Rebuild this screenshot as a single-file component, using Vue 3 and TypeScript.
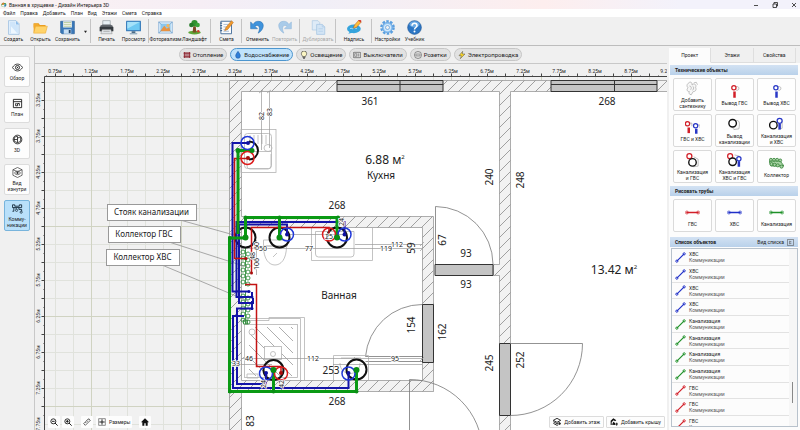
<script setup lang="ts">
import { ref } from 'vue'

interface Tool { id: string; label: string; icon: string; disabled?: boolean }
interface Tile { label: string[]; icon: string }
interface Mark { t: string; x: number; y: number; r?: boolean; k?: string }

const icons: Record<string, string> = {
  app: '<path d="M1 9 8 3l12 2 2 8-8 8-11-3z" fill="#43a047"/><path d="M3 12l8-3 10 3-6 8-11-2z" fill="#f4f8f0"/><path d="M2 8 9 2l5 5-6 5z" fill="#e0782c"/><path d="M13 11l7-2v7l-6 4z" fill="#2f7dc4"/>',
  create: '<path d="M4 1h12l5 5v17H4z" fill="#e4f1fd" stroke="#8db4dc"/><path d="M6 3h9v5h4v13H6z" fill="#cfe5fa"/><path d="M16 1v6h5z" fill="#8ebdea"/><path d="M8 10l10 11H8z" fill="#eef7ff"/>',
  open: '<path d="M1 5h8l2 3h9v4H1z" fill="#e79a1c"/><path d="M1 20V6h7l2 3h10v11z" fill="#f3ab2f"/><path d="M4 10h19l-3 11H1z" fill="#ffd36a" stroke="#e9a32c" stroke-width=".8"/>',
  save: '<path d="M1 2h22v20H3l-2-2z" fill="#3a78b8" stroke="#2a5d95"/><path d="M5 2h14v10H5z" fill="#f4f4ef"/><path d="M6 4h12M6 7h12M6 10h12" stroke="#9dbb7a"/><path d="M6 15h12v7H6z" fill="#c9dff4"/><path d="M14 16h3v5h-3z" fill="#26486e"/>',
  print: '<path d="M6 1h12v9H6z" fill="#e8f0f5" stroke="#8b969d"/><path d="M2 9l4-2h12l4 2v9H2z" fill="#60666c"/><path d="M1 11h22v7H1z" fill="#343a3f"/><path d="M5 15h14l2 7H3z" fill="#dfe4e8" stroke="#777" stroke-width=".7"/><path d="M7 18h10" stroke="#888"/>',
  preview: '<rect x="0" y="1" width="24" height="17" rx="1" fill="#3f81bd"/><path d="M2 3h20v13H2z" fill="#6ec9f3"/><path d="M2 3h20L2 14z" fill="#a5e2fa"/><path d="M9 18h6v3H9z" fill="#4d6c87"/><path d="M6 21h12v2H6z" fill="#8fa9bd"/>',
  photo: '<path d="M1 3h22v18H1z" fill="#d8ebfa" stroke="#7ba9d2"/><path d="M4 6h16v12H4z" fill="#8bc7ef"/><path d="M4 17l6-8 4 5 4-3 2 7H4z" fill="#e99342"/><circle cx="16" cy="9" r="2.6" fill="#f6b65b"/><path d="M1 3l4 4M23 3l-4 4M1 21l4-4M23 21l-4-4" stroke="#4d86bb"/>',
  land: '<ellipse cx="12" cy="20" rx="10" ry="3" fill="#5da637"/><path d="M10 10h4l1 10H9z" fill="#7b4a24"/><circle cx="12" cy="5" r="5" fill="#2f9130"/><circle cx="7" cy="8" r="3.6" fill="#247c29"/><circle cx="17" cy="8" r="3.6" fill="#3aa53a"/><circle cx="18" cy="18" r="2" fill="#cf3b2b"/>',
  estimate: '<path d="M3 2h17v20H3z" fill="#fdfdfd" stroke="#466f9c" stroke-width="1.5"/><path d="M7 7h8M7 11h7M7 15h5M7 18h9" stroke="#7898bd"/><path d="M2 5h3M2 9h3M2 13h3M2 17h3" stroke="#2d5684" stroke-width="1.6"/><path d="M9 17l2-5L20 1l3 3-9 11z" fill="#f19a2b" stroke="#a75c13" stroke-width=".7"/>',
  undo: '<path d="M1 3v11h11l-4-4c5-4 10 1 5 11 10-5 12-19 0-19-4 0-6 2-8 5z" fill="#3f93dc" stroke="#2168ab" stroke-width=".8"/>',
  redo: '<path d="M23 3v11H12l4-4c-5-4-10 1-5 11C1 16-1 2 11 2c4 0 6 2 8 5z" fill="#a9cbe9" stroke="#8db3d6" stroke-width=".8"/>',
  dup: '<path d="M2 1h9l3 3v12H2z" fill="#deebf7" stroke="#a5c5e2"/><path d="M9 7h9l4 4v12H9z" fill="#d2e4f5" stroke="#9bbfdf"/><path d="M18 7v4h4M12 14h7M12 18h7" fill="none" stroke="#a8c7e4"/>',
  note: '<ellipse cx="11" cy="14" rx="11" ry="7" fill="#35a4dc"/><path d="M5 18l-3 4 8-2z" fill="#35a4dc"/><path d="M5 14c2-3 3 2 5-1s3 2 6 0" fill="none" stroke="#d8f3ff" stroke-width="1.2"/><path d="M10 13l2-5 7-8 4 3-8 9z" fill="#ffbf3b" stroke="#a34619" stroke-width=".7"/><path d="M18 1l4 3 1-3-3-2z" fill="#d33b2f"/>',
  gear: '<circle cx="12" cy="12" r="10" fill="none" stroke="#5a9fe0" stroke-width="3.4" stroke-dasharray="4 2.28"/><circle cx="12" cy="12" r="8.2" fill="#8cc3f3" stroke="#4a90d6"/><circle cx="12" cy="12" r="5.8" fill="#d4e9fb"/><circle cx="12" cy="12" r="3.2" fill="#f0f0f0" stroke="#4a90d6"/>',
  help: '<circle cx="12" cy="12" r="11" fill="#2c76c4" stroke="#1f5796"/><ellipse cx="12" cy="7" rx="8" ry="5" fill="#6aa9e4"/><path d="M8 9c0-5 8-5 8 0 0 3-4 3-4 6" fill="none" stroke="#fff" stroke-width="2.4"/><circle cx="12" cy="18.5" r="1.6" fill="#fff"/>',
  heat: '<path d="M4 3v18M9 3v18M15 3v18M20 3v18" stroke="#8a1c28" stroke-width="3"/><path d="M2 7h20M2 17h20" stroke="#8a1c28" stroke-width="2"/>',
  drop: '<path d="M12 1c4 6 7 9 7 14a7 7 0 0 1-14 0c0-5 3-8 7-14z" fill="#2f7fd8" stroke="#174f96" stroke-width="1.5"/>',
  bulb: '<path d="M8 17c0-3-4-4-4-9a8 8 0 0 1 16 0c0 5-4 6-4 9z" fill="#fbf6c4" stroke="#333" stroke-width="1.8"/><path d="M8 19h8M9 22h6" stroke="#222" stroke-width="2"/>',
  sw: '<rect x="1" y="4" width="22" height="16" rx="2" fill="none" stroke="#444" stroke-width="1.8"/><path d="M5 8h6v8H5zM14 9h5M14 12h5M14 15h5" fill="none" stroke="#444" stroke-width="1.4"/>',
  sock: '<circle cx="12" cy="12" r="10.6" fill="none" stroke="#444" stroke-width="1.6"/><rect x="5" y="9" width="14" height="6" rx="3" fill="none" stroke="#444" stroke-width="1.3"/><circle cx="9" cy="12" r="1" fill="#333"/><circle cx="15" cy="12" r="1" fill="#333"/>',
  bolt: '<path d="M14 1 3 14h7l-3 9 14-14h-8z" fill="#ffd924" stroke="#555" stroke-width="1.6"/>',
  eye: '<path d="M1 12c6-10 16-10 22 0-6 10-16 10-22 0z" fill="none" stroke="#222" stroke-width="1.8"/><circle cx="12" cy="12" r="4.4" fill="none" stroke="#222" stroke-width="2"/><circle cx="12" cy="12" r="1.5" fill="#222"/>',
  plan: '<path d="M3 3h18v18H3z" fill="none" stroke="#222" stroke-width="2"/><path d="M3 8h18M8 12v5h4v-5h4v5M8 12h2" fill="none" stroke="#222" stroke-width="2"/>',
  cube: '<circle cx="12" cy="12" r="9.5" fill="none" stroke="#222" stroke-width="1.8"/><path d="M5 7l7-2v14l-7-3zM12 9l7-3v10l-7 3M3 12h9" fill="none" stroke="#222" stroke-width="1.8"/>',
  inside: '<path d="M12 1l10 5v12l-10 5L2 18V6z" fill="none" stroke="#333" stroke-width="1.5"/><path d="M2 6l10 4 10-4M5 13c4-5 10-5 14 0-4 5-10 5-14 0z" fill="none" stroke="#333" stroke-width="1.5"/><circle cx="12" cy="13" r="2.4" fill="#333"/>',
  pipes: '<path d="M1 4h5v3h10V4h5v6H1zM4 10v8H1M15 10v4h6v4M9 10v4" fill="none" stroke="#172c3d" stroke-width="2"/><circle cx="10" cy="16" r="2.4" fill="none" stroke="#172c3d" stroke-width="1.6"/><circle cx="20" cy="20" r="2.4" fill="none" stroke="#172c3d" stroke-width="1.6"/>',
  ware: '<path d="M6 3c3-3 6 0 5 3 4-3 8 0 6 4 2 5-1 7-4 7l-3 5c-4 0-4-4-3-5-4 0-5-4-2-6-3-3-2-6 1-8z" fill="#f7f7f7" stroke="#888" stroke-width=".8"/><path d="M7 8c3 0 4 3 2 6M12 8c2 1 3 4 0 7M14 3l4-1 2 4" fill="none" stroke="#888" stroke-width=".8"/>',
  hot: '<path d="M12 6c4-3 7-2 7 1s-3 4-5 2" fill="none" stroke="#999"/><circle cx="11" cy="6" r="3.4" fill="#fff" stroke="#d21f28" stroke-width="2"/><path d="M10 12h4v10h-4z" fill="#d21f28"/>',
  cold: '<path d="M12 6c4-3 7-2 7 1s-3 4-5 2" fill="none" stroke="#999"/><circle cx="11" cy="6" r="3.4" fill="#fff" stroke="#2837c6" stroke-width="2"/><path d="M10 12h4v10h-4z" fill="#2837c6"/>',
  both: '<circle cx="4" cy="6" r="3.4" fill="#fff" stroke="#d21f28" stroke-width="2"/><path d="M4 12h4v9H4z" fill="#d21f28"/><path d="M8 5h3v5M21 8h3v5" fill="none" stroke="#999"/><circle cx="17" cy="9" r="3.4" fill="#fff" stroke="#2837c6" stroke-width="2"/><path d="M16 14h4v8h-4z" fill="#2837c6"/>',
  sewer: '<path d="M13 6c7-2 8 3 6 13l-8 1-2-3" fill="#fafafa" stroke="#999"/><circle cx="9" cy="10" r="6" fill="#fff" stroke="#111" stroke-width="2.2"/>',
  sewCold: '<path d="M14 4l7 2v12l-6 2" fill="none" stroke="#999"/><circle cx="17" cy="6" r="4" fill="#fff" stroke="#2837c6" stroke-width="2"/><circle cx="7" cy="13" r="6" fill="#fff" stroke="#111" stroke-width="2.2"/><path d="M15 11h4v9h-4z" fill="#2837c6"/>',
  sewHot: '<path d="M14 6l7 4v11l-8 1" fill="none" stroke="#999"/><circle cx="7" cy="5" r="4" fill="#fff" stroke="#d21f28" stroke-width="2"/><circle cx="12" cy="15" r="6" fill="#fff" stroke="#111" stroke-width="2.2"/>',
  sewAll: '<path d="M12 3l8 2v6" fill="none" stroke="#999"/><circle cx="5" cy="5" r="4" fill="#fff" stroke="#d21f28" stroke-width="2"/><circle cx="9" cy="14" r="6" fill="#fff" stroke="#111" stroke-width="2.2"/><circle cx="19" cy="9" r="3.4" fill="#fff" stroke="#2837c6" stroke-width="2"/><path d="M17 13h4v9h-4z" fill="#2837c6"/>',
  coll: '<g fill="#a9d3a5" stroke="#2e7d32" stroke-width="1.2"><path d="M0 8h18l6 8H3z"/><circle cx="3" cy="6" r="2.3"/><circle cx="8" cy="6" r="2.3"/><circle cx="13" cy="6" r="2.3"/><circle cx="18" cy="7" r="2.3"/><circle cx="4" cy="13" r="2.5"/><circle cx="9" cy="14" r="2.5"/><circle cx="14" cy="15" r="2.5"/><circle cx="20" cy="17" r="2.5"/></g>',
  zout: '<circle cx="10" cy="10" r="7.5" fill="none" stroke="#111" stroke-width="2.6"/><path d="M15 15l8 8M6 10h8" stroke="#111" stroke-width="2.8"/>',
  zin: '<circle cx="10" cy="10" r="7.5" fill="none" stroke="#111" stroke-width="2.6"/><path d="M15 15l8 8M6 10h8M10 6v8" stroke="#111" stroke-width="2.8"/>',
  ruler: '<path d="M2 17 17 2l5 5L7 22zM7 12l3 3M11 8l3 3M15 4l3 3" fill="none" stroke="#222" stroke-width="2"/>',
  dims: '<path d="M2 2h20v20H2z" fill="none" stroke="#222" stroke-width="1.5"/><path d="M12 4v16M4 12h16" stroke="#222" stroke-width="3"/>',
  home: '<path d="M12 1 0 13h4v10h6v-7h4v7h6V13h4z" fill="#111"/>',
  floor: '<path d="M12 1 1 7l11 6 11-6zM1 11l11 6 5-3M1 16l11 6 4-2M20 12v9M16 17h8" fill="none" stroke="#111" stroke-width="2.6"/>',
  roof: '<path d="M2 8 10 1l9 6-4 3-4-3-6 5v9H2z" fill="#111"/><path d="M6 20l4-9 5 4 1 6z" fill="#111"/><path d="M20 14v9M16 18h8" stroke="#111" stroke-width="2.6"/>',
}

const menu = ['Файл', 'Правка', 'Добавить', 'План', 'Вид', 'Этажи', 'Смета', 'Справка']

const toolGroups: Tool[][] = [
  [{ id: 'a', label: 'Создать', icon: 'create' }, { id: 'b', label: 'Открыть', icon: 'open' }, { id: 'c', label: 'Сохранить', icon: 'save' }],
  [{ id: 'd', label: 'Печать', icon: 'print' }, { id: 'e', label: 'Просмотр', icon: 'preview' }],
  [{ id: 'f', label: 'Фотореализм', icon: 'photo' }, { id: 'g', label: 'Ландшафт', icon: 'land' }],
  [{ id: 'h', label: 'Смета', icon: 'estimate' }],
  [{ id: 'i', label: 'Отменить', icon: 'undo' }, { id: 'j', label: 'Повторить', icon: 'redo', disabled: true }],
  [{ id: 'k', label: 'Дублировать', icon: 'dup', disabled: true }],
  [{ id: 'l', label: 'Надпись', icon: 'note' }],
  [{ id: 'm', label: 'Настройки', icon: 'gear' }, { id: 'n', label: 'Учебник', icon: 'help' }],
]
const wideGroups = [5, 6]

const modes = [
  { label: ['Обзор'], icon: 'eye' },
  { label: ['План'], icon: 'plan' },
  { label: ['3D'], icon: 'cube' },
  { label: ['Вид', 'изнутри'], icon: 'inside' },
  { label: ['Комму-', 'никации'], icon: 'pipes' },
]
const mode = ref(4)

const systems = [
  { label: 'Отопление', icon: 'heat' },
  { label: 'Водоснабжение', icon: 'drop' },
  { label: 'Освещение', icon: 'bulb' },
  { label: 'Выключатели', icon: 'sw' },
  { label: 'Розетки', icon: 'sock' },
  { label: 'Электропроводка', icon: 'bolt' },
]
const system = ref(1)

const tabs = ['Проект', 'Этажи', 'Свойства']
const tab = ref(0)

const tiles: Tile[] = [
  { label: ['Добавить', 'сантехнику'], icon: 'ware' },
  { label: ['Вывод ГВС'], icon: 'hot' },
  { label: ['Вывод ХВС'], icon: 'cold' },
  { label: ['ГВС и ХВС'], icon: 'both' },
  { label: ['Вывод', 'канализации'], icon: 'sewer' },
  { label: ['Канализация', 'и ХВС'], icon: 'sewCold' },
  { label: ['Канализация', 'и ГВС'], icon: 'sewHot' },
  { label: ['Канализация', 'ХВС и ГВС'], icon: 'sewAll' },
  { label: ['Коллектор'], icon: 'coll' },
]
const pipeTools = [
  { label: 'ГВС', color: '#d21f28' },
  { label: 'ХВС', color: '#2030c8' },
  { label: 'Канализация', color: '#1f9128' },
]
const objects = [
  ...Array.from({ length: 4 }, () => ({ name: 'ХВС', color: '#2030c8' })),
  ...Array.from({ length: 4 }, () => ({ name: 'Канализация', color: '#1f9128' })),
  ...Array.from({ length: 3 }, () => ({ name: 'ГВС', color: '#d21f28' })),
]

const range = (n: number) => Array.from({ length: n }, (_, i) => i)
const xLabels = range(18).map(i => ({ x: 55 + i * 36, t: (0.75 + i * 0.5).toFixed(2) + 'м' }))
const yLabels = range(10).map(i => ({ y: 100 + i * 36, t: (3.25 + i * 0.5).toFixed(2) + 'м' }))

const marks: Mark[] = [
  { t: '361', x: 370, y: 101 }, { t: '268', x: 607, y: 101 }, { t: '240', x: 489, y: 177, r: true },
  { t: '248', x: 520, y: 180, r: true }, { t: '268', x: 337, y: 205 }, { t: '59', x: 411, y: 248, r: true },
  { t: '67', x: 442, y: 240, r: true }, { t: '93', x: 466, y: 253 }, { t: '93', x: 466, y: 284 },
  { t: '154', x: 411, y: 325, r: true }, { t: '162', x: 442, y: 332, r: true }, { t: '245', x: 489, y: 363, r: true },
  { t: '252', x: 520, y: 360, r: true }, { t: '253', x: 331, y: 370 }, { t: '268', x: 337, y: 401 },
  { t: '83', x: 250, y: 421, r: true }, { t: 'Кухня', x: 381, y: 175, k: 'name' }, { t: 'Ванная', x: 339, y: 295, k: 'name' },
  { t: '82', x: 261, y: 116, r: true, k: 'dim' }, { t: '83', x: 269, y: 112, r: true, k: 'dim' },
  { t: '50', x: 263, y: 248, k: 'dim' }, { t: '77', x: 309, y: 248, k: 'dim' }, { t: '119', x: 386, y: 248, k: 'dim' },
  { t: '112', x: 397, y: 244, k: 'dim' }, { t: '24', x: 341, y: 222, r: true, k: 'dim' }, { t: '25', x: 329, y: 236, k: 'dim' },
  { t: '60', x: 256, y: 246, r: true, k: 'dim' }, { t: '48', x: 252, y: 256, r: true, k: 'dim' }, { t: '106', x: 256, y: 264, r: true, k: 'dim' },
  { t: '46', x: 249, y: 358, k: 'dim' }, { t: '33', x: 236, y: 363, k: 'dim' }, { t: '112', x: 313, y: 358, k: 'dim' },
  { t: '95', x: 395, y: 358, k: 'dim' }, { t: '24', x: 263, y: 384, r: true, k: 'dim' }, { t: '42', x: 281, y: 384, r: true, k: 'dim' },
]

const valves = [...range(6).map(i => 252 + i * 6), ...range(5).map(i => 296 + i * 6)]
const callouts = [
  { t: 'Стояк канализации', x: 107, y: 204, w: 89, l: 'M180 220 245 238' },
  { t: 'Коллектор ГВС', x: 108, y: 226, w: 72, l: 'M169 242 247 267' },
  { t: 'Коллектор ХВС', x: 106, y: 249, w: 73, l: 'M162 265 248 301' },
]
</script>

<template>
  <div class="app">
    <header class="titlebar">
      <svg class="logo" viewBox="0 0 24 24" v-html="icons.app" />
      <h1>Ванная в хрущевке - Дизайн Интерьера 3D</h1>
      <div class="winctl">
        <button type="button" aria-label="Свернуть"><svg viewBox="0 0 8 8"><path d="M2 4.5h4" /></svg></button>
        <button type="button" aria-label="Развернуть"><svg viewBox="0 0 8 8"><path d="M2 3h3.500v3.500H2zM3 3V1.500h3.500V5H5.500" /></svg></button>
        <button type="button" aria-label="Закрыть"><svg viewBox="0 0 8 8"><path d="M2 2l4 4M6 2 2 6" /></svg></button>
      </div>
    </header>

    <nav class="menubar">
      <button v-for="m in menu" :key="m" type="button">{{ m }}</button>
    </nav>

    <div class="toolbar">
      <div v-for="(group, gi) in toolGroups" :key="gi" class="group" :class="{ wide: wideGroups.includes(gi) }">
        <button v-for="t in group" :key="t.id" type="button" class="tool" :disabled="t.disabled">
          <svg viewBox="0 0 24 24" v-html="icons[t.icon]" />
          <span>{{ t.label }}</span>
        </button>
        <button v-if="gi === 0" type="button" class="more" aria-label="Варианты сохранения">
          <svg viewBox="0 0 4 4"><path d="M0 1h4L2 4z" /></svg>
        </button>
      </div>
    </div>

    <div class="body">
      <nav class="rail">
        <button v-for="(m, i) in modes" :key="m.icon" type="button" :class="{ on: mode === i }" @click="mode = i">
          <svg viewBox="0 0 24 24" v-html="icons[m.icon]" />
          <span v-for="l in m.label" :key="l">{{ l }}</span>
        </button>
      </nav>

      <main class="work">
        <div class="systems">
          <button v-for="(s, i) in systems" :key="s.label" type="button" :class="{ on: system === i }" @click="system = i">
            <svg viewBox="0 0 24 24" v-html="icons[s.icon]" />
            <span>{{ s.label }}</span>
          </button>
        </div>

        <div class="canvas">
          <svg class="plan" role="img" aria-label="План помещений">
            <defs>
              <pattern id="hatch" width="11" height="11" patternUnits="userSpaceOnUse">
                <path d="M-1 12 12 -1M-1 1 1 -1M10 12 12 10" stroke="#8c8c8c" stroke-width=".8" />
              </pattern>
              <pattern id="minor" x="55" y="82" width="18" height="18" patternUnits="userSpaceOnUse">
                <path d="M0 .5H18M.5 0V18" stroke="#e0e2dc" stroke-width="1" fill="none" />
              </pattern>
              <pattern id="major" x="91" y="136" width="90" height="90" patternUnits="userSpaceOnUse">
                <path d="M0 .5H90M.5 0V90" stroke="#d0d3c2" stroke-width="1" fill="none" />
              </pattern>
              <pattern id="tray" width="12" height="12" patternUnits="userSpaceOnUse">
                <path d="M0 0 12 12" stroke="#999" stroke-width=".8" />
              </pattern>
            </defs>
            <g transform="translate(-34 -64)">
              <rect x="45" y="77" width="3000" height="2000" fill="#f1f1f1" />
              <rect x="45" y="77" width="3000" height="2000" fill="url(#minor)" />
              <rect x="45" y="77" width="3000" height="2000" fill="url(#major)" />

              <!-- rulers -->
              <g class="axis">
                <path d="M44.5 2000V76.5H3000" />
                <path v-for="i in 70" :key="'x' + i" :d="`M${37.5 + i * 9} 76.5v${i % 2 ? -1 : -3}`" />
                <path v-for="i in 38" :key="'y' + i" :d="`M44.5 ${73.5 + i * 9}h${i % 2 ? -3 : -1}`" />
              </g>
              <text v-for="l in xLabels" :key="l.t" class="tick" :x="l.x" y="73">{{ l.t }}</text>
              <text v-for="l in yLabels" :key="l.t" class="tick" :transform="`translate(40 ${l.y}) rotate(-90)`">{{ l.t }}</text>

              <!-- rooms and walls -->
              <path d="M230 80H3000V2000H230z" fill="#fff" />
              <g class="wall">
                <path fill-rule="evenodd" d="M229.5 80.5H3000V91.5H510.5V2000H499.5V275.5H493.5V264.5H499.5V91.5H241.5V216.5H433.5V391.5H241.5V2000H229.5zM241.5 227.5V380.5H422.5V227.5z" />
              </g>
              <path class="hatching" fill-rule="evenodd" d="M229.5 80.5H3000V91.5H510.5V2000H499.5V275.5H493.5V264.5H499.5V91.5H241.5V216.5H433.5V391.5H241.5V2000H229.5zM241.5 227.5V380.5H422.5V227.5z" />
              <g class="opening">
                <path d="M337 80.5h106v11h-106zM337 84.5h106M400 80.5v11" />
                <path d="M551 80.5h106v11h-106zM551 84.5h106M614.5 80.5v11" />
                <path d="M435 264.5h58v11h-58zM422.5 304.5h11v58h-11zM499.5 343.5h11v72h-11z" />
              </g>
              <g class="thin">
                <path d="M435.5 264V206.5A58 58 0 0 1 493 264" />
                <path d="M422 304.5A57 57 0 0 0 365.5 356.5H422M365.5 361.5H422" />
                <path d="M510 343.5H582.5A72 72 0 0 1 510 415.5" />
                <path d="M409.5 2000V379.5A73 73 0 0 1 482.5 452" />
              </g>

              <!-- sanitary ware -->
              <g class="ware">
                <rect x="241" y="129.5" width="35" height="43" />
                <rect x="244.5" y="133.5" width="27" height="35" rx="3" />
                <path d="M246 151.5h25M250 135v9M254 135v9M258 135v9M262 135v9M266 135v9M247 156v10q0 3 3 3h18q3 0 3-3v-12" />
                <ellipse cx="268" cy="148" rx="4" ry="3.5" />
                <path d="M311.5 227.5V260.5H372.5V227.5M315.5 231.5H354V254q0 3-3 3H318.5q-3 0-3-3z" />
                <path d="M263.5 246c0 14 6 19 11.5 19s11.5-5 11.5-19zM263.5 240h24v6h-24zM273 257l4-4" />
                <path d="M241.5 320.5H269V317.5H304.500V380M241.5 318.5H300.500V380" />
                <rect x="244.5" y="324.5" width="53" height="53" />
                <path d="M249 327H293V376H249z" fill="url(#tray)" stroke="none" />
                <circle cx="252" cy="332" r="3" fill="#fff" />
                <rect x="264.5" y="346.5" width="17" height="13" fill="#fff" />
                <circle cx="273" cy="354" r="2.5" />
                <path d="M247 374h11v4h-11zM333.5 380V355.5H368.5V380M341 358h20M340 363c0 14 20 14 20 0" />
              </g>
              <g class="measure">
                <path d="M261.5 91V150M269.5 91V148M241 248.5H422M355 244.5H422M241 358.5H422M241 364.5H272M333 364.5H422M256.5 240V275M286 234.5H345" />
                <path d="M259 93l4-3M267 93l4-3M420 251l4-4M420 246l4-4M240 361l4-4M420 361l4-4M351 361l4-4" />
              </g>

              <!-- collectors -->
              <g class="valves">
                <path d="M245.500 248v38M245.500 292v32M243.500 320h4v4h-4z" />
                <template v-for="v in valves" :key="v">
                  <circle cx="243" :cy="v" r="2" />
                  <circle cx="248" :cy="v + 2" r="2" />
                </template>
              </g>

              <path v-for="c in callouts" :key="c.t" class="leader" :d="c.l" />

              <!-- outlets -->
              <g class="sewerring">
                <path d="M249 141.5a9 9 0 1 1 0 18" />
                <circle cx="245.5" cy="237.5" r="10" /><circle cx="279.5" cy="237.5" r="10" /><circle cx="337" cy="237.5" r="10" />
                <circle cx="273.5" cy="370" r="10" /><circle cx="356.5" cy="369.5" r="10" />
              </g>

              <!-- pipes -->
              <g class="pipe cold">
                <path d="M248 143H232.5V291.5H249" />
                <path d="M337 222H236.5V297H252V292" />
                <path d="M287 234V224.5H239V303H253V298" />
                <path d="M252 308.5H237V384H266V373M244 316H233V388H348.5V373M344.5 234V221M252 301v9" />
              </g>
              <g class="pipe hot">
                <path d="M248 158.5H234.5V258.5H246" />
                <path d="M329 234V227.5H251.5V273" />
                <path d="M245 284.5H256.5V366.5H281V373" />
              </g>
              <g class="pipe sewer">
                <path d="M253 150.5H238V234" />
                <path d="M245.5 238V217.5H339M279.5 217.5V238M337 217.5V238" />
                <path d="M245 238H229.5V391.5H356.5V370M273.5 370V391" />
              </g>
              <g class="ring coldring">
                <circle cx="247.5" cy="143" r="6.5" /><circle cx="287" cy="234.5" r="6.5" /><circle cx="344.5" cy="234.5" r="6.5" />
                <circle cx="266" cy="373.5" r="6.5" /><circle cx="348.5" cy="373.5" r="6.5" />
              </g>
              <g class="ring hotring">
                <circle cx="247.5" cy="158" r="6.5" /><circle cx="329" cy="234.5" r="6.5" /><circle cx="281" cy="373.5" r="6.5" />
              </g>
              <g fill="#1010a0">
                <circle cx="248" cy="143" r="2" /><circle cx="287" cy="234.5" r="2" /><circle cx="344.5" cy="234.5" r="2" /><circle cx="266" cy="373" r="2" /><circle cx="348.5" cy="373" r="2" />
                <circle cx="249" cy="291.5" r="1.5" /><circle cx="252" cy="297" r="1.5" /><circle cx="252" cy="303" r="1.5" /><circle cx="252" cy="308.5" r="1.5" />
              </g>
              <g fill="#a80c0c">
                <circle cx="248" cy="158" r="2" /><circle cx="329" cy="234.5" r="1.5" /><circle cx="281" cy="373" r="2" /><circle cx="246" cy="258.5" r="1.5" /><circle cx="251.5" cy="273" r="1.5" />
              </g>
              <g fill="#0a8f14">
                <circle cx="245.5" cy="237.5" r="3" /><circle cx="279.5" cy="237.5" r="3" /><circle cx="337" cy="237.5" r="3" /><circle cx="273.5" cy="370" r="3" /><circle cx="356.5" cy="370" r="3" />
                <circle cx="252" cy="150.5" r="2.5" /><circle cx="238" cy="150.5" r="2.5" /><circle cx="245.5" cy="217.5" r="2" /><circle cx="279.5" cy="217.5" r="2" /><circle cx="338" cy="217.5" r="2" />
                <circle cx="230" cy="238" r="2" /><circle cx="230" cy="391.5" r="2" /><circle cx="273.5" cy="391.5" r="2" /><circle cx="356.5" cy="391.5" r="2" />
              </g>

              <text v-for="(m, i) in marks" :key="i" class="mark" :class="m.k" :transform="`translate(${m.x} ${m.y})${m.r ? ' rotate(-90)' : ''}`" dy=".36em">{{ m.t }}</text>
              <text class="mark area" x="385" y="164">6.88 м<tspan class="sup" dy="-5">2</tspan></text>
              <text class="mark area" x="614" y="274">13.42 м<tspan class="sup" dy="-5">2</tspan></text>

              <g v-for="c in callouts" :key="c.t">
                <rect class="callout" :x="c.x + 0.5" :y="c.y + 0.5" :width="c.w" height="16" />
                <text class="mark note" :x="c.x + c.w / 2" :y="c.y + 11">{{ c.t }}</text>
              </g>
            </g>
          </svg>

          <div class="float left">
            <button type="button" aria-label="Уменьшить"><svg viewBox="0 0 24 24" v-html="icons.zout" /></button>
            <button type="button" aria-label="Увеличить"><svg viewBox="0 0 24 24" v-html="icons.zin" /></button>
            <button type="button" class="apart" aria-label="Линейка"><svg viewBox="0 0 24 24" v-html="icons.ruler" /></button>
            <button type="button"><svg viewBox="0 0 24 24" v-html="icons.dims" /><span>Размеры</span></button>
            <button type="button" class="apart" aria-label="Домой"><svg viewBox="0 0 24 24" v-html="icons.home" /></button>
          </div>
          <div class="float right">
            <button type="button"><svg viewBox="0 0 24 24" v-html="icons.floor" /><span>Добавить этаж</span></button>
            <button type="button"><svg viewBox="0 0 24 24" v-html="icons.roof" /><span>Добавить крышу</span></button>
          </div>
        </div>
      </main>

      <aside class="panel">
        <div class="tabs" role="tablist">
          <button v-for="(t, i) in tabs" :key="t" type="button" role="tab" :aria-selected="tab === i" :class="{ on: tab === i }" @click="tab = i">{{ t }}</button>
        </div>
        <div class="content">
          <h2>Технические объекты</h2>
          <div class="tiles">
            <button v-for="t in tiles" :key="t.icon" type="button">
              <svg viewBox="0 0 24 24" v-html="icons[t.icon]" />
              <span v-for="l in t.label" :key="l">{{ l }}</span>
            </button>
          </div>
          <h2>Рисовать трубы</h2>
          <div class="tiles">
            <button v-for="p in pipeTools" :key="p.label" type="button">
              <svg viewBox="0 0 24 24" :fill="p.color" :stroke="p.color"><path d="M2 12h20" stroke-width="2.4" /><circle cx="3" cy="12" r="2.4" /><circle cx="21" cy="12" r="2.4" /></svg>
              <span>{{ p.label }}</span>
            </button>
          </div>
          <h2 class="listhead">Список объектов
            <button type="button">Вид списка <svg viewBox="0 0 8 8"><path d="M.5.5h7v7h-7zM3 2v4M3 3h2M3 5h2" /></svg></button>
          </h2>
          <div class="list">
            <ul>
              <li v-for="(o, i) in objects" :key="i">
                <svg viewBox="0 0 12 12" :fill="o.color" :stroke="o.color"><path d="M2 10 10 2" stroke-width="1.3" /><circle cx="2" cy="10" r="1.2" /><circle cx="10" cy="2" r="1.2" /></svg>
                <div><b>{{ o.name }}</b><small>Коммуникации</small></div>
              </li>
            </ul>
            <div class="track"><div class="thumb" /></div>
          </div>
        </div>
      </aside>
    </div>
  </div>
</template>

<style>
body { margin: 0; }
</style>

<style scoped>
.app { display: flex; flex-direction: column; height: 100vh; overflow: hidden; background: #f0f0f0; color: #1c1c1c; font-family: Roboto, "Liberation Sans", sans-serif; font-size: 5px; line-height: 6px; }
button { font: inherit; color: inherit; border: 0; padding: 0; margin: 0; background: none; cursor: pointer; }
svg { display: block; fill: none; }

.titlebar { display: flex; align-items: center; gap: 2px; height: 9px; flex: none; padding-left: 1px; background: linear-gradient(90deg, #faf2f2, #f6eef5 25%, #f0eff8 38%, #fdeeee 68%, #f3f2fb 85%); }
.logo { width: 6px; height: 6px; }
h1 { flex: 1; margin: 0; font-size: 5px; font-weight: 400; }
.winctl { display: flex; gap: 11px; padding-right: 2px; }
.winctl svg { width: 8px; height: 8px; stroke: #222; stroke-width: .8; }
.menubar { display: flex; gap: 5px; flex: none; height: 8px; padding-left: 3px; background: #fff; }

.toolbar { display: flex; flex: none; height: 26px; padding: 2px 0 0; border-bottom: 1px solid #bdbdbd; }
.group { display: flex; height: 24px; padding: 0 1px 0 2px; border-right: 1px solid #c4c4c4; }
.group:first-child { padding-left: 0; }
.group:last-child { border-right: 0; }
.tool { display: flex; flex-direction: column; align-items: center; gap: 1px; width: 27px; padding-top: 1px; white-space: nowrap; }
.wide .tool { width: 32px; }
.group:nth-child(3) .tool { width: 29px; }
.tool svg { width: 15px; height: 15px; }
.tool:disabled { color: #a8a8a8; }
.more { width: 8px; }
.more svg { width: 3px; height: 3px; fill: #222; margin: auto; }

.body { display: flex; flex: 1; min-height: 0; }
.rail { display: flex; flex-direction: column; gap: 5px; flex: none; width: 26px; padding: 10px 4px 0; border-right: 1px solid #c8c8c8; margin-right: -1px; }
.rail button { display: flex; flex-direction: column; align-items: center; justify-content: center; box-sizing: border-box; height: 31px; border: 1px solid #dcdcdc; border-radius: 2px; background: #fdfdfd; }
.rail svg { width: 11px; height: 11px; margin-bottom: 2px; }
.rail .on { background: #b9e0fa; border-color: #78b4dc; }

.work { display: flex; flex-direction: column; flex: 1; min-width: 0; }
.systems { display: flex; justify-content: center; align-items: center; gap: 3px; flex: none; height: 18px; box-sizing: border-box; border-bottom: 1px solid #c8c8c8; font-size: 6px; }
.systems button { display: flex; align-items: center; gap: 2px; height: 13px; padding: 0 3px; border: 1px solid #c6c6c6; border-radius: 7px; background: #e2e2e2; box-sizing: border-box; white-space: nowrap; }
.systems svg { width: 8px; height: 8px; }
.systems .on { background: #bfe2fb; border-color: #4d96cf; }

.canvas { position: relative; flex: 1; min-height: 0; overflow: hidden; }
.plan { width: 100%; height: 100%; }
.axis { stroke: #444; stroke-width: 1; }
.tick { font-size: 5px; text-anchor: middle; fill: #222; }
.wall { fill: #f2f2f2; stroke: #999; stroke-width: .8; }
.hatching { fill: url(#hatch); }
.opening { fill: #c4c4c4; stroke: #333; stroke-width: 1; }
.thin { stroke: #777; stroke-width: .8; }
.ware { stroke: #b4b4b4; stroke-width: .8; }
.measure { stroke: #9a9a9a; stroke-width: .7; }
.valves { stroke: #2f8b3a; stroke-width: .9; }
.leader { stroke: #888; stroke-width: .7; }
.sewerring { stroke: #111; stroke-width: 2; }
.pipe { stroke-width: 2; }
.cold { stroke: #1414a8; }
.hot { stroke: #c41414; stroke-width: 1.5px; }
.sewer { stroke: #0a9a14; stroke-width: 3; }
.ring { stroke-width: 1.5px; }
.coldring { stroke: #2138d8; }
.hotring { stroke: #dc1c1c; }
.mark { font-family: "Noto Sans", sans-serif; font-size: 10px; text-anchor: middle; fill: #222; }
.dim { font-size: 7px; paint-order: stroke; stroke: #fff; stroke-width: 1.5px; }
.area { font-size: 12px; }
.sup { font-size: 6px; }
.callout { fill: #fff; stroke: #999; }
.note { font-size: 8px; }

.float { position: absolute; bottom: 2px; display: flex; gap: 2px; }
.float.left { left: 14px; }
.float.right { right: 2px; }
.float button { display: flex; align-items: center; gap: 3px; height: 12px; padding: 0 2px; background: #fdfdfd; border-radius: 1px; white-space: nowrap; }
.float.left .apart { margin: 0 1px 0 5px; }
.float svg { width: 8px; height: 8px; }
.float.right button { border: 1px solid #dcdcdc; padding: 0 3px; box-sizing: border-box; }

.panel { display: flex; flex-direction: column; flex: none; width: 131px; padding: 2px 0 0 2px; }
.tabs { display: grid; grid-template-columns: repeat(3, 1fr); height: 15px; flex: none; padding-right: 4px; }
.tabs button { border-right: 1px solid #dedede; border-bottom: 1px solid #dedede; }
.tabs .on { background: #fcfcfc; border-bottom-color: #fcfcfc; }
.content { display: flex; flex-direction: column; flex: 1; min-height: 0; padding: 2px 2px 3px 1px; background: #fcfcfc; }
h2 { display: flex; justify-content: space-between; align-items: center; flex: none; height: 10px; margin: 0; padding: 0 4px 0 5px; font-size: 5px; background: linear-gradient(#d3e2f3, #b9d1ea); }
h2 button { display: flex; align-items: center; gap: 3px; font-weight: 400; }
h2 svg { width: 7px; height: 7px; stroke: #555; stroke-width: .7; }
.tiles { display: grid; grid-template-columns: repeat(3, 1fr); gap: 3px; padding: 3px 2px 3px 3px; }
.tiles button { display: flex; flex-direction: column; align-items: center; justify-content: center; height: 33px; border: 1px solid #dadada; border-radius: 2px; background: #fefefe; box-sizing: border-box; white-space: nowrap; }
.tiles svg { width: 15px; height: 15px; margin-bottom: 1px; }
.listhead { margin-top: 2px; }
.list { display: flex; flex: 1; min-height: 0; margin: 1px 0 0 1px; border: 1px solid #b8c2cc; overflow: hidden; }
ul { flex: 1; margin: 0; padding: 0; list-style: none; }
li { display: flex; align-items: center; gap: 3px; box-sizing: border-box; height: 17px; padding-left: 3px; border-bottom: 1px solid #e2e2e2; }
li:nth-child(3n) { height: 16px; }
li svg { width: 11px; height: 11px; }
li b, li small { display: block; font-size: 5px; font-weight: 400; }
li small { color: #555; }
.track { position: relative; flex: none; width: 8px; background: #f6f6f6; }
.thumb { position: absolute; top: 75%; left: 3px; width: 1px; height: 12%; background: #888; }
</style>
